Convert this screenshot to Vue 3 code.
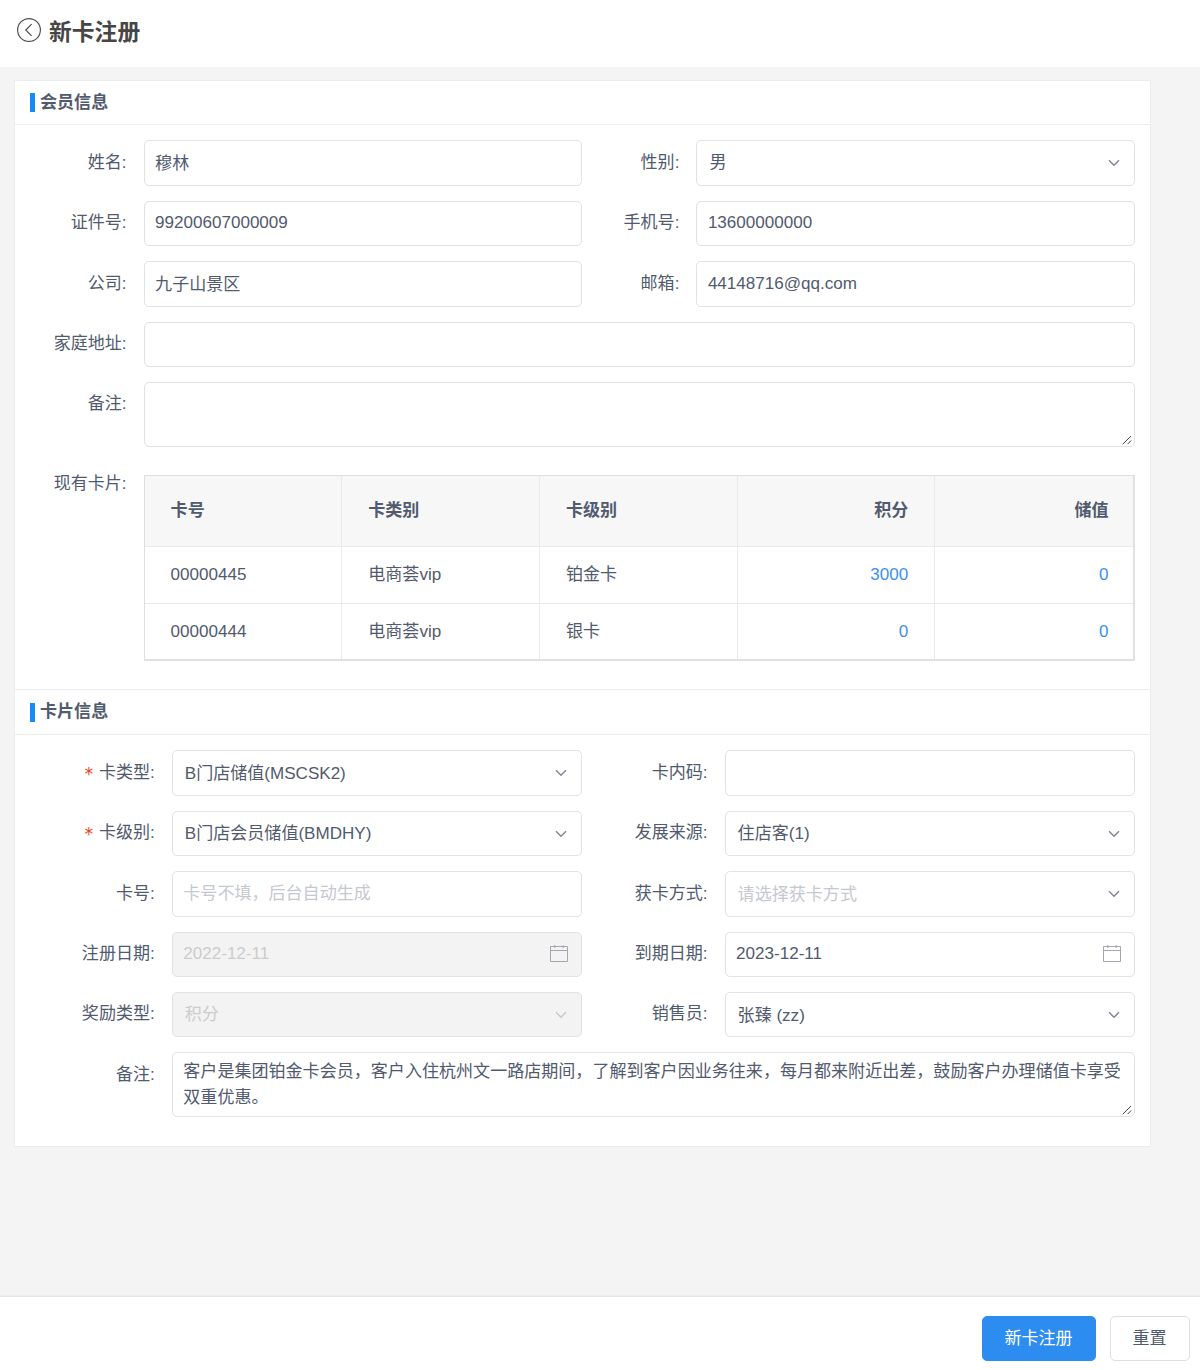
<script setup>
const memberRows = [
  [
    { label: '姓名', value: '穆林', dy: 1 },
    { label: '性别', value: '男', type: 'select' },
  ],
  [
    { label: '证件号', value: '99200607000009' },
    { label: '手机号', value: '13600000000' },
  ],
  [
    { label: '公司', value: '九子山景区', dy: 1 },
    { label: '邮箱', value: '44148716@qq.com' },
  ],
  [{ label: '家庭地址', value: '' }],
  [{ label: '备注', value: '', type: 'textarea' }],
]

const cardRows = [
  [
    { label: '卡类型', value: 'B门店储值(MSCSK2)', type: 'select', required: true, dy: 1 },
    { label: '卡内码', value: '' },
  ],
  [
    { label: '卡级别', value: 'B门店会员储值(BMDHY)', type: 'select', required: true, dy: 1 },
    { label: '发展来源', value: '住店客(1)', type: 'select', dy: 1 },
  ],
  [
    { label: '卡号', placeholder: '卡号不填，后台自动生成' },
    { label: '获卡方式', placeholder: '请选择获卡方式', type: 'select', dy: 1 },
  ],
  [
    { label: '注册日期', value: '2022-12-11', type: 'date', disabled: true },
    { label: '到期日期', value: '2023-12-11', type: 'date' },
  ],
  [
    { label: '奖励类型', value: '积分', type: 'select', disabled: true },
    { label: '销售员', value: '张臻 (zz)', type: 'select', dy: 1 },
  ],
  [
    {
      label: '备注',
      type: 'textarea',
      value:
        '客户是集团铂金卡会员，客户入住杭州文一路店期间，了解到客户因业务往来，每月都来附近出差，鼓励客户办理储值卡享受双重优惠。',
    },
  ],
]

const sections = [
  { title: '会员信息', kind: 'member', rows: memberRows },
  { title: '卡片信息', kind: 'card', rows: cardRows },
]

const columns = ['卡号', '卡类别', '卡级别', '积分', '储值']
const cards = [
  ['00000445', '电商荟vip', '铂金卡', '3000', '0'],
  ['00000444', '电商荟vip', '银卡', '0', '0'],
]
</script>

<template>
  <div class="page">
    <header class="topbar">
      <svg class="back" width="26" height="26" viewBox="0 0 26 26">
        <circle cx="13" cy="13" r="11.4" />
        <path d="M15.6 7.2 9.8 13l5.8 5.8" />
      </svg>
      <h1>新卡注册</h1>
    </header>

    <main class="content">
      <div class="panel">
        <section v-for="s in sections" :key="s.kind" :class="s.kind">
          <h2 class="section-title"><i class="mark"></i>{{ s.title }}</h2>
          <div class="form">
            <div v-for="(row, r) in s.rows" :key="r" class="row">
              <div v-for="f in row" :key="f.label" class="field">
                <label class="label"><span v-if="f.required" class="star">*</span>{{ f.label }}:</label>
                <div
                  class="control"
                  :class="[f.type, { disabled: f.disabled, placeholder: f.placeholder, low: f.dy }]"
                >
                  <span class="value">{{ f.value || f.placeholder }}</span>
                  <svg v-if="f.type === 'select'" class="arrow" width="14" height="10" viewBox="0 0 14 10">
                    <path d="M2 2.2 7 7.2l5-5" />
                  </svg>
                  <svg v-if="f.type === 'date'" class="calendar" width="20" height="20" viewBox="0 0 20 20">
                    <path d="M1.5 2.5h17v15h-17zM1.5 6.5h17M5.8 1v3M14.2 1v3" />
                  </svg>
                  <svg v-if="f.type === 'textarea'" class="grip" width="10" height="10" viewBox="0 0 10 10">
                    <path d="M.7 9.3 9 1M5.6 9.1 9.2 5.5" />
                  </svg>
                </div>
              </div>
            </div>
            <div v-if="s.kind === 'member'" class="row cards">
              <div class="field">
                <label class="label">现有卡片:</label>
                <table>
                  <thead>
                    <tr>
                      <th v-for="c in columns" :key="c">{{ c }}</th>
                    </tr>
                  </thead>
                  <tbody>
                    <tr v-for="card in cards" :key="card[0]">
                      <td v-for="(v, i) in card" :key="i">{{ v }}</td>
                    </tr>
                  </tbody>
                </table>
              </div>
            </div>
          </div>
        </section>
      </div>
    </main>

    <footer class="actions">
      <button class="btn primary">新卡注册</button>
      <button class="btn">重置</button>
    </footer>
  </div>
</template>

<style>
body {
  margin: 0;
  background: #f4f4f4;
}
</style>

<style scoped>
.page {
  display: flex;
  flex-direction: column;
  width: 1200px;
  height: 1370px;
  overflow: hidden;
  box-sizing: border-box;
  background: #f4f4f4;
  color: #515a6e;
  font-family: "Liberation Sans", "Noto Sans CJK SC", sans-serif;
  font-size: 17.06px;
}
.page * {
  box-sizing: border-box;
}
.topbar {
  display: flex;
  height: 67px;
  padding: 17px 0 0 16px;
  gap: 7px;
  background: #fff;
}
.back {
  fill: none;
  stroke: #505050;
  stroke-width: 1.2;
}
h1 {
  margin: 0;
  font-size: 22.8px;
  line-height: 30px;
  font-weight: 700;
  color: #464646;
}
.content {
  flex: 1;
  padding: 13px 49px 0 14px;
}
.panel {
  height: 1067px;
  border: 1px solid #ebecee;
  background: #fff;
}
.section-title {
  display: flex;
  align-items: center;
  gap: 5px;
  height: 44px;
  margin: 0;
  padding-left: 15px;
  border-bottom: 1px solid #ebedf0;
  font-size: 17.06px;
  line-height: 24px;
  font-weight: 700;
}
.card .section-title {
  height: 46px;
  border-top: 1px solid #ebedf0;
}
.mark {
  width: 5px;
  height: 19px;
  background: #148cf5;
}
.member {
  height: 608px;
}
.form {
  display: flex;
  flex-direction: column;
  gap: 14.9px;
  padding: 15.4px 15px 0 14.4px;
}
.row {
  display: flex;
}
.field {
  display: flex;
  flex: 1;
}
.label {
  flex: none;
  width: 114.2px;
  padding-top: 10.4px;
  padding-right: 17px;
  text-align: right;
  line-height: 24px;
  white-space: nowrap;
}
.card .label {
  width: 142.4px;
}
.star {
  margin-right: 5px;
  color: #ed4014;
  font-family: "DejaVu Sans Mono", monospace;
  line-height: 0;
  position: relative;
  top: 2px;
}
.control {
  position: relative;
  display: flex;
  align-items: center;
  flex: 1;
  height: 45.5px;
  padding: 0 13px 0 10.5px;
  border: 1px solid #e0e2e6;
  border-radius: 5px;
  background: #fff;
  line-height: 26px;
}
.value {
  flex: 1;
  margin-top: -0.4px;
}
.low .value {
  margin-top: 1.8px;
}
.select {
  padding-left: 12px;
}
.date .value {
  margin-top: -1.6px;
}
.placeholder {
  color: #c5c8ce;
}
.disabled {
  background: #f3f3f3;
  color: #ccc;
}
.arrow {
  fill: none;
  stroke: #808695;
  stroke-width: 1.5;
}
.disabled .arrow {
  stroke: #c5c8ce;
}
.calendar {
  margin-right: -1px;
  fill: none;
  stroke: #a3a7b1;
}
.textarea {
  align-items: flex-start;
  height: 65px;
  padding-top: 6px;
  padding-right: 8px;
}
.textarea .value {
  margin-top: 0;
}
.grip {
  position: absolute;
  right: 2px;
  bottom: 1px;
  fill: none;
  stroke: #444;
}
.cards {
  margin-top: 13.2px;
}
.cards .label {
  margin-top: -3px;
  padding-top: 0;
}
table {
  flex: none;
  width: calc(100% - 114.2px);
  height: 186px;
  table-layout: fixed;
  border-collapse: separate;
  border-spacing: 0;
  border: 1px solid #dcdee2;
  border-right: 2px solid #e0e1e3;
  border-bottom: 2px solid #e0e1e3;
}
th,
td {
  padding: 0 26px;
  line-height: 24px;
  text-align: left;
  border-right: 1px solid #e8eaec;
  border-bottom: 1px solid #e8eaec;
}
th {
  height: 71px;
  background: #f7f7f8;
  font-weight: 700;
}
td {
  height: 57px;
}
tbody tr:last-child td {
  height: 55px;
  border-bottom: 0;
}
th:last-child,
td:last-child {
  padding-right: 24.5px;
  border-right: 0;
}
th:nth-child(n + 4),
td:nth-child(n + 4) {
  text-align: right;
}
td:nth-child(n + 4) {
  color: #3b8ff0;
}
.actions {
  display: flex;
  justify-content: flex-end;
  gap: 14px;
  height: 73px;
  padding: 19px 10.5px 0 0;
  background: #fff;
  box-shadow: 0 -1px 2px rgba(0, 0, 0, 0.09);
}
.btn {
  width: 80px;
  height: 45px;
  padding: 0;
  border: 1px solid #dcdee2;
  border-radius: 5px;
  background: #fff;
  color: #515a6e;
  font: inherit;
  line-height: 26px;
}
.primary {
  width: 114px;
  border-color: #2d8cf0;
  background: #2d8cf0;
  color: #fff;
}
</style>
